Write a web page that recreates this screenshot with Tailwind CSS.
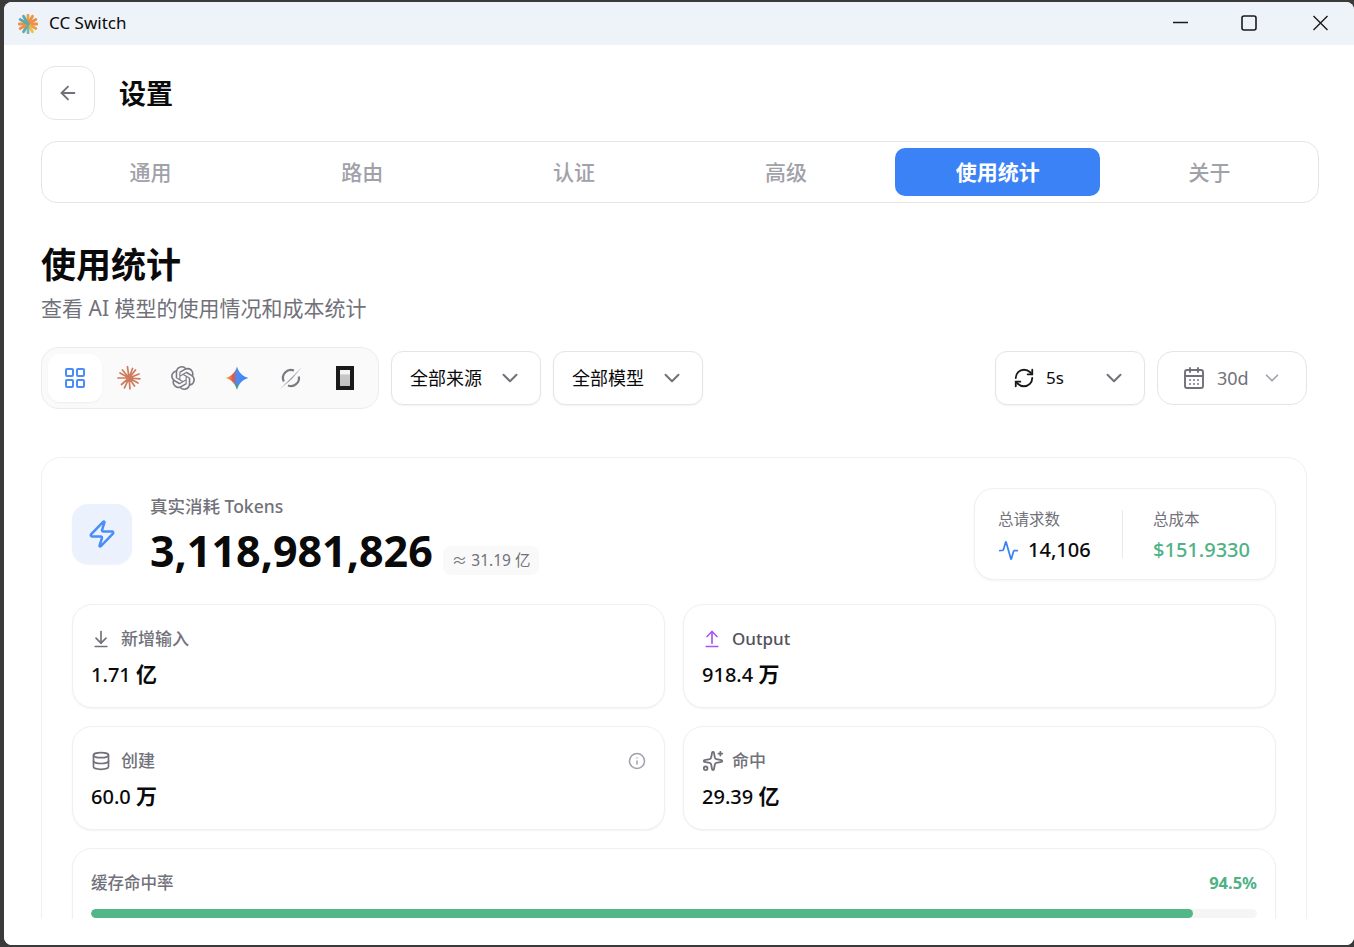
<!doctype html>
<html lang="zh">
<head>
<meta charset="utf-8">
<title>CC Switch</title>
<script src="https://cdn.jsdelivr.net/npm/@tailwindcss/browser@4"></script>
</head>
<body class="bg-[#3a3a3a] overflow-hidden">
<div class="ml-[4px] mt-[2px] h-[943px] w-[1350px] flex flex-col bg-white rounded-t-[8px] rounded-b-[8px] overflow-hidden font-['Noto_Sans','Noto_Sans_CJK_SC',sans-serif] text-[#0a0a0a]">

  <!-- title bar -->
  <div class="h-[43px] shrink-0 bg-[#eef3fa] flex items-center pl-[14px]">
    <svg class="w-[20px] h-[20px]" viewBox="0 0 20 20" fill="none" stroke-width="2.800" stroke-linecap="round">
      <path d="M10 10V1" stroke="#e8a33d"/><path d="M10 10l4.500-7.800" stroke="#ef8f45"/><path d="M10 10l7.800-4.500" stroke="#ef8f45"/><path d="M10 10h9" stroke="#ef8f45"/><path d="M10 10l7.800 4.500" stroke="#e8a33d"/><path d="M10 10l4.500 7.800" stroke="#e8c04d"/><path d="M10 10v9" stroke="#7fb6a8"/><path d="M10 10l-4.500 7.800" stroke="#5fa9ac"/><path d="M10 10l-7.800 4.500" stroke="#ef8f45"/><path d="M10 10H1" stroke="#ef8f45"/><path d="M10 10L2.200 5.500" stroke="#5fa9ac"/><path d="M10 10L5.500 2.200" stroke="#5fa9ac"/>
    </svg>
    <span class="ml-[11px] mb-[2px] text-[17px] leading-none">CC Switch</span>
    <div class="ml-auto flex items-center h-full">
      <svg class="w-[70px] h-[43px]" viewBox="0 0 70 43" fill="none" stroke="#1a1a1a" stroke-width="1.300"><path d="M28 20.500h15"/></svg>
      <svg class="w-[68px] h-[43px]" viewBox="0 0 68 43" fill="none" stroke="#1a1a1a" stroke-width="1.600"><rect x="27" y="14" width="14" height="14" rx="2"/></svg>
      <svg class="w-[71px] h-[43px]" viewBox="0 0 71 43" fill="none" stroke="#1a1a1a" stroke-width="1.400"><path d="M30.500 14l14 14M44.500 14l-14 14"/></svg>
    </div>
  </div>

  <!-- scroll area -->
  <div class="h-[874px] shrink-0 overflow-hidden pl-[37px] pt-[21px]">
    <div class="w-[1278px]">
      <!-- header -->
      <div class="flex items-center gap-[24px] h-[54px]">
        <button class="w-[54px] h-[54px] rounded-[14px] border border-[#e5e5e5] bg-white flex items-center justify-center">
          <svg class="w-[22px] h-[22px]" viewBox="0 0 24 24" fill="none" stroke="#71717a" stroke-width="2" stroke-linecap="round" stroke-linejoin="round"><path d="m12 19-7-7 7-7"/><path d="M19 12H5"/></svg>
        </button>
        <h2 class="text-[27px] font-bold leading-none">设置</h2>
      </div>

      <!-- tabs -->
      <div class="mt-[21px] h-[62px] rounded-[16px] border border-[#e5e5e5] bg-white p-[6px] grid grid-cols-6 gap-[7px] text-[21px] text-[#a1a1aa] font-medium">
        <div class="flex items-center justify-center pt-[1px]">通用</div>
        <div class="flex items-center justify-center pt-[1px]">路由</div>
        <div class="flex items-center justify-center pt-[1px]">认证</div>
        <div class="flex items-center justify-center pt-[1px]">高级</div>
        <div class="flex items-center justify-center pt-[1px] rounded-[10px] bg-[#3b82f6] text-white font-bold">使用统计</div>
        <div class="flex items-center justify-center pt-[1px]">关于</div>
      </div>

      <div class="w-[1266px]">
        <h1 class="mt-[40px] text-[35px] leading-[44px] font-bold">使用统计</h1>
        <p class="mt-[7px] text-[21px] leading-[28px] text-[#71717a]">查看 AI 模型的使用情况和成本统计</p>

        <!-- filters -->
        <div class="mt-[25px] h-[62px] flex items-center justify-between">
          <div class="flex items-center gap-[12px]">
            <div class="h-[62px] rounded-[18px] border border-[#ececec] bg-[#fafafa] px-[6px] flex items-center">
              <div class="w-[54px] h-[48px] rounded-[12px] bg-white shadow-xs flex items-center justify-center">
                <svg class="w-[24px] h-[24px]" viewBox="0 0 24 24" fill="none" stroke="#4a8df6" stroke-width="2" stroke-linecap="round" stroke-linejoin="round"><rect width="7" height="7" x="3" y="3" rx="1"/><rect width="7" height="7" x="14" y="3" rx="1"/><rect width="7" height="7" x="14" y="14" rx="1"/><rect width="7" height="7" x="3" y="14" rx="1"/></svg>
              </div>
              <div class="w-[54px] h-[48px] flex items-center justify-center">
                <svg class="w-[24px] h-[24px]" viewBox="0 0 24 24" fill="none" stroke="#cf7a5c" stroke-width="1.700" stroke-linecap="round"><path d="M12 12 10.500.8M12 12l3.500-9.500M12 12l6.500-8M12 12l10-4M12 12l11 .8M12 12l9 5M12 12l5.500 8M12 12l1 10.800M12 12l-4.500 9.800M12 12l-7.500 6.500M12 12H.8M12 12 3 7M12 12 5.500 4"/><circle cx="12" cy="12" r="2" fill="#cf7a5c" stroke="none"/></svg>
              </div>
              <div class="w-[54px] h-[48px] flex items-center justify-center">
                <svg class="w-[24px] h-[24px]" viewBox="0 0 24 24" fill="#7a7a82"><path d="M22.2819 9.8211a5.9847 5.9847 0 0 0-.5157-4.9108 6.0462 6.0462 0 0 0-6.5098-2.9A6.0651 6.0651 0 0 0 4.9807 4.1818a5.9847 5.9847 0 0 0-3.9977 2.9 6.0462 6.0462 0 0 0 .7427 7.0966 5.98 5.98 0 0 0 .511 4.9107 6.051 6.051 0 0 0 6.5146 2.9001A5.9847 5.9847 0 0 0 13.2599 24a6.0557 6.0557 0 0 0 5.7718-4.2058 5.9894 5.9894 0 0 0 3.9977-2.9001 6.0557 6.0557 0 0 0-.7475-7.0729zm-9.022 12.6081a4.4755 4.4755 0 0 1-2.8764-1.0408l.1419-.0804 4.7783-2.7582a.7948.7948 0 0 0 .3927-.6813v-6.7369l2.02 1.1686a.071.071 0 0 1 .038.052v5.5826a4.504 4.504 0 0 1-4.4945 4.4944zm-9.6607-4.1254a4.4708 4.4708 0 0 1-.5346-3.0137l.142.0852 4.783 2.7582a.7712.7712 0 0 0 .7806 0l5.8428-3.3685v2.3324a.0804.0804 0 0 1-.0332.0615L9.74 19.9502a4.4992 4.4992 0 0 1-6.1408-1.6464zM2.3408 7.8956a4.485 4.485 0 0 1 2.3655-1.9728V11.6a.7664.7664 0 0 0 .3879.6765l5.8144 3.3543-2.0201 1.1685a.0757.0757 0 0 1-.071 0l-4.8303-2.7865A4.504 4.504 0 0 1 2.3408 7.872zm16.5963 3.8558L13.1038 8.364 15.1192 7.2a.0757.0757 0 0 1 .071 0l4.8303 2.7913a4.4944 4.4944 0 0 1-.6765 8.1042v-5.6772a.79.79 0 0 0-.407-.667zm2.0107-3.0231l-.142-.0852-4.7735-2.7818a.7759.7759 0 0 0-.7854 0L9.409 9.2297V6.8974a.0662.0662 0 0 1 .0284-.0615l4.8303-2.7866a4.4992 4.4992 0 0 1 6.6802 4.66zM8.3065 12.863l-2.02-1.1638a.0804.0804 0 0 1-.038-.0567V6.0742a4.4992 4.4992 0 0 1 7.3757-3.4537l-.142.0805L8.704 5.459a.7948.7948 0 0 0-.3927.6813zm1.0976-2.3654l2.602-1.4998 2.6069 1.4998v2.9994l-2.5974 1.4997-2.6067-1.4997Z"/></svg>
              </div>
              <div class="w-[54px] h-[48px] flex items-center justify-center">
                <svg class="w-[24px] h-[24px]" viewBox="0 0 24 24">
                  <defs>
                    <linearGradient id="gemA" x1="0" y1="0.500" x2="1" y2="0.500"><stop offset="0.050" stop-color="#f2b632"/><stop offset=".32" stop-color="#e0574c"/><stop offset=".52" stop-color="#4a8df6"/><stop offset="1" stop-color="#3b82f6"/></linearGradient>
                    <linearGradient id="gemB" x1="0" y1="0" x2="0" y2="1"><stop offset="0" stop-color="#e0574c" stop-opacity="0"/><stop offset=".65" stop-color="#4a8df6" stop-opacity="0"/><stop offset="0.900" stop-color="#34a853"/></linearGradient>
                  </defs>
                  <path d="M12 .5c1.500 5.500 5 9.500 11.500 11.500-6.500 2-10 6-11.500 11.500C10.500 18 7 14 .5 12 7 10 10.500 6 12 .5Z" fill="url(#gemA)"/>
                  <path d="M12 .5c1.500 5.500 5 9.500 11.500 11.500-6.500 2-10 6-11.500 11.500C10.500 18 7 14 .5 12 7 10 10.500 6 12 .5Z" fill="url(#gemB)"/>
                </svg>
              </div>
              <div class="w-[54px] h-[48px] flex items-center justify-center">
                <svg class="w-[24px] h-[24px]" viewBox="0 0 24 24" fill="none" stroke="#7a7a82" stroke-width="2.200"><path d="M19.800 10.500A8 8 0 0 1 9 19.500"/><path d="M4.800 15.500A8 8 0 0 1 15 4.600"/><path d="M1 23 23 1 12.500 13.500Z" fill="#a1a1a8" stroke="none"/></svg>
              </div>
              <div class="w-[54px] h-[48px] flex items-center justify-center">
                <svg class="w-[18px] h-[24px]" viewBox="0 0 18 24"><defs><linearGradient id="cur" x1="0" y1="0" x2="0" y2="1"><stop offset="0" stop-color="#f5f5f5"/><stop offset=".25" stop-color="#f5f5f5"/><stop offset=".3" stop-color="#c8c8c8"/><stop offset="1" stop-color="#c0c0c0"/></linearGradient></defs><rect width="18" height="24" fill="#1a1a1a"/><rect x="4" y="4" width="10" height="16" fill="url(#cur)"/></svg>
              </div>
            </div>
            <div class="w-[150px] h-[54px] rounded-[12px] border border-[#e5e5e5] bg-white shadow-xs flex items-center justify-between pl-[18px] pr-[17px] text-[18px]">
              <span>全部来源</span>
              <svg class="w-[26px] h-[26px]" viewBox="0 0 24 24" fill="none" stroke="#71717a" stroke-width="1.800" stroke-linecap="round" stroke-linejoin="round"><path d="m6 9 6 6 6-6"/></svg>
            </div>
            <div class="w-[150px] h-[54px] rounded-[12px] border border-[#e5e5e5] bg-white shadow-xs flex items-center justify-between pl-[18px] pr-[17px] text-[18px]">
              <span>全部模型</span>
              <svg class="w-[26px] h-[26px]" viewBox="0 0 24 24" fill="none" stroke="#71717a" stroke-width="1.800" stroke-linecap="round" stroke-linejoin="round"><path d="m6 9 6 6 6-6"/></svg>
            </div>
          </div>
          <div class="flex items-center gap-[12px]">
            <div class="w-[150px] h-[54px] rounded-[12px] border border-[#e5e5e5] bg-white shadow-xs flex items-center pl-[17px] pr-[17px] text-[17px]">
              <svg class="w-[22px] h-[22px]" viewBox="0 0 24 24" fill="none" stroke="#18181b" stroke-width="2" stroke-linecap="round" stroke-linejoin="round"><path d="M3 12a9 9 0 0 1 9-9 9.750 9.750 0 0 1 6.740 2.740L21 8"/><path d="M21 3v5h-5"/><path d="M21 12a9 9 0 0 1-9 9 9.750 9.750 0 0 1-6.740-2.740L3 16"/><path d="M8 16H3v5"/></svg>
              <span class="ml-[11px]">5s</span>
              <svg class="ml-auto w-[26px] h-[26px]" viewBox="0 0 24 24" fill="none" stroke="#71717a" stroke-width="1.800" stroke-linecap="round" stroke-linejoin="round"><path d="m6 9 6 6 6-6"/></svg>
            </div>
            <div class="w-[150px] h-[54px] rounded-[16px] border border-[#e5e5e5] bg-white flex items-center pl-[24px] pr-[23px] text-[18px] text-[#71717a]">
              <svg class="w-[24px] h-[24px]" viewBox="0 0 24 24" fill="none" stroke="#71717a" stroke-width="1.900" stroke-linecap="round" stroke-linejoin="round"><path d="M8 2v4"/><path d="M16 2v4"/><rect width="18" height="18" x="3" y="4" rx="2"/><path d="M3 10h18"/><path d="M8 14h.01"/><path d="M12 14h.01"/><path d="M16 14h.01"/><path d="M8 18h.01"/><path d="M12 18h.01"/><path d="M16 18h.01"/></svg>
              <span class="ml-[11px]">30d</span>
              <svg class="ml-auto w-[22px] h-[22px]" viewBox="0 0 24 24" fill="none" stroke="#a1a1aa" stroke-width="1.800" stroke-linecap="round" stroke-linejoin="round"><path d="m6 9 6 6 6-6"/></svg>
            </div>
          </div>
        </div>

        <!-- main card -->
        <div class="mt-[48px] rounded-[20px] border border-[#f0f0f0] bg-white px-[30px] pt-[30px] h-[600px]">
          <div class="flex items-start justify-between h-[92px]">
            <div class="flex items-start">
              <div class="mt-[16px] w-[60px] h-[60px] rounded-[16px] bg-[#ebf2fe] shadow-xs flex items-center justify-center">
                <svg class="w-[30px] h-[30px]" viewBox="0 0 24 24" fill="none" stroke="#4a8df6" stroke-width="2" stroke-linecap="round" stroke-linejoin="round"><path d="M4 14a1 1 0 0 1-.78-1.630l9.900-10.200a.500.500 0 0 1 .860.460l-1.920 6.020A1 1 0 0 0 13 10h7a1 1 0 0 1 .780 1.630l-9.900 10.200a.500.500 0 0 1-.860-.460l1.920-6.020A1 1 0 0 0 11 14z"/></svg>
              </div>
              <div class="ml-[18px]">
                <div class="mt-[5px] h-[26px] leading-[26px] text-[17.500px] text-[#71717a] font-medium">真实消耗 Tokens</div>
                <div class="mt-[4px] flex items-end">
                  <span class="text-[43px] leading-[56px] font-bold">3,118,981,826</span>
                  <span class="ml-[10px] mb-[4px] h-[29px] px-[9px] rounded-[8px] bg-[#f9f9f9] text-[15.500px] leading-[29px] text-[#71717a]">≈ 31.19 亿</span>
                </div>
              </div>
            </div>
            <div class="w-[302px] h-[92px] rounded-[20px] border border-[#f0f0f0] bg-white shadow-[0_1px_3px_rgba(0,0,0,0.05)] flex items-center pl-[23px]">
              <div class="w-[125px] h-[48px] border-r border-[#e8e8e8] shrink-0">
                <div class="text-[15.500px] leading-[18px] text-[#71717a]">总请求数</div>
                <div class="mt-[10px] flex items-center">
                  <svg class="w-[21px] h-[21px]" viewBox="0 0 24 24" fill="none" stroke="#3b82f6" stroke-width="2" stroke-linecap="round" stroke-linejoin="round"><path d="M22 12h-2.480a2 2 0 0 0-1.930 1.460l-2.350 8.360a.250.250 0 0 1-.480 0L9.240 2.180a.250.250 0 0 0-.480 0l-2.350 8.360A2 2 0 0 1 4.490 12H2"/></svg>
                  <span class="ml-[9px] text-[20px] leading-[24px] font-medium">14,106</span>
                </div>
              </div>
              <div class="ml-[30px] h-[48px]">
                <div class="text-[15.500px] leading-[18px] text-[#71717a]">总成本</div>
                <div class="mt-[10px] text-[20px] leading-[24px] font-medium text-[#4fb286]">$151.9330</div>
              </div>
            </div>
          </div>

          <div class="mt-[24px] grid grid-cols-2 gap-x-[18px] gap-y-[18px]">
            <div class="h-[104px] rounded-[20px] border border-[#f0f0f0] bg-white shadow-xs pl-[18px] pr-[18px] pt-[21px]">
              <div class="flex items-center h-[26px] text-[17px] text-[#71717a] font-medium">
                <svg class="w-[20px] h-[20px]" viewBox="0 0 24 24" fill="none" stroke="#71717a" stroke-width="2" stroke-linecap="round" stroke-linejoin="round"><path d="M12 17V3"/><path d="m6 11 6 6 6-6"/><path d="M19 21H5"/></svg>
                <span class="ml-[10px]">新增输入</span>
              </div>
              <div class="mt-[8px] text-[20px] leading-[28px] font-medium">1.71 <span class="font-bold text-[21px]">亿</span></div>
            </div>
            <div class="h-[104px] rounded-[20px] border border-[#f0f0f0] bg-white shadow-xs pl-[18px] pr-[18px] pt-[21px]">
              <div class="flex items-center h-[26px] text-[17px] text-[#52525b] font-medium">
                <svg class="w-[20px] h-[20px]" viewBox="0 0 24 24" fill="none" stroke="#a855f7" stroke-width="2" stroke-linecap="round" stroke-linejoin="round"><path d="m18 9-6-6-6 6"/><path d="M12 3v14"/><path d="M5 21h14"/></svg>
                <span class="ml-[10px]">Output</span>
              </div>
              <div class="mt-[8px] text-[20px] leading-[28px] font-medium">918.4 <span class="font-bold text-[21px]">万</span></div>
            </div>
            <div class="h-[104px] rounded-[20px] border border-[#f0f0f0] bg-white shadow-xs pl-[18px] pr-[18px] pt-[21px]">
              <div class="flex items-center h-[26px] text-[17px] text-[#71717a] font-medium">
                <svg class="w-[20px] h-[20px]" viewBox="0 0 24 24" fill="none" stroke="#71717a" stroke-width="2" stroke-linecap="round" stroke-linejoin="round"><ellipse cx="12" cy="5" rx="9" ry="3"/><path d="M3 5v14a9 3 0 0 0 18 0V5"/><path d="M3 12a9 3 0 0 0 18 0"/></svg>
                <span class="ml-[10px]">创建</span>
                <svg class="ml-auto w-[18px] h-[18px]" viewBox="0 0 24 24" fill="none" stroke="#a1a1aa" stroke-width="2" stroke-linecap="round" stroke-linejoin="round"><circle cx="12" cy="12" r="10"/><path d="M12 16v-4"/><path d="M12 8h.01"/></svg>
              </div>
              <div class="mt-[8px] text-[20px] leading-[28px] font-medium">60.0 <span class="font-bold text-[21px]">万</span></div>
            </div>
            <div class="h-[104px] rounded-[20px] border border-[#f0f0f0] bg-white shadow-xs pl-[18px] pr-[18px] pt-[21px]">
              <div class="flex items-center h-[26px] text-[17px] text-[#71717a] font-medium">
                <svg class="w-[22px] h-[22px]" viewBox="0 0 24 24" fill="none" stroke="#71717a" stroke-width="2" stroke-linecap="round" stroke-linejoin="round"><path d="M11.017 2.814a1 1 0 0 1 1.966 0l1.051 5.558a2 2 0 0 0 1.594 1.594l5.558 1.051a1 1 0 0 1 0 1.966l-5.558 1.051a2 2 0 0 0-1.594 1.594l-1.051 5.558a1 1 0 0 1-1.966 0l-1.051-5.558a2 2 0 0 0-1.594-1.594l-5.558-1.051a1 1 0 0 1 0-1.966l5.558-1.051a2 2 0 0 0 1.594-1.594z"/><path d="M20 2v4"/><path d="M22 4h-4"/><circle cx="4" cy="20" r="2"/></svg>
                <span class="ml-[8px]">命中</span>
              </div>
              <div class="mt-[8px] text-[20px] leading-[28px] font-medium">29.39 <span class="font-bold text-[21px]">亿</span></div>
            </div>
          </div>

          <div class="mt-[18px] h-[120px] rounded-[20px] border border-[#f0f0f0] bg-white shadow-xs px-[18px] pt-[21px]">
            <div class="flex items-center justify-between h-[26px]">
              <span class="text-[16.500px] text-[#71717a] font-medium">缓存命中率</span>
              <span class="text-[16.500px] font-bold text-[#4fb286]">94.5%</span>
            </div>
            <div class="mt-[13px] h-[9px] rounded-full bg-[#f5f5f5] overflow-hidden">
              <div class="h-full rounded-full bg-[#52b788]" style="width:94.5%"></div>
            </div>
          </div>
        </div>
      </div>
    </div>
  </div>
  <div class="h-[26px] shrink-0 bg-white"></div>
</div>
</body>
</html>
